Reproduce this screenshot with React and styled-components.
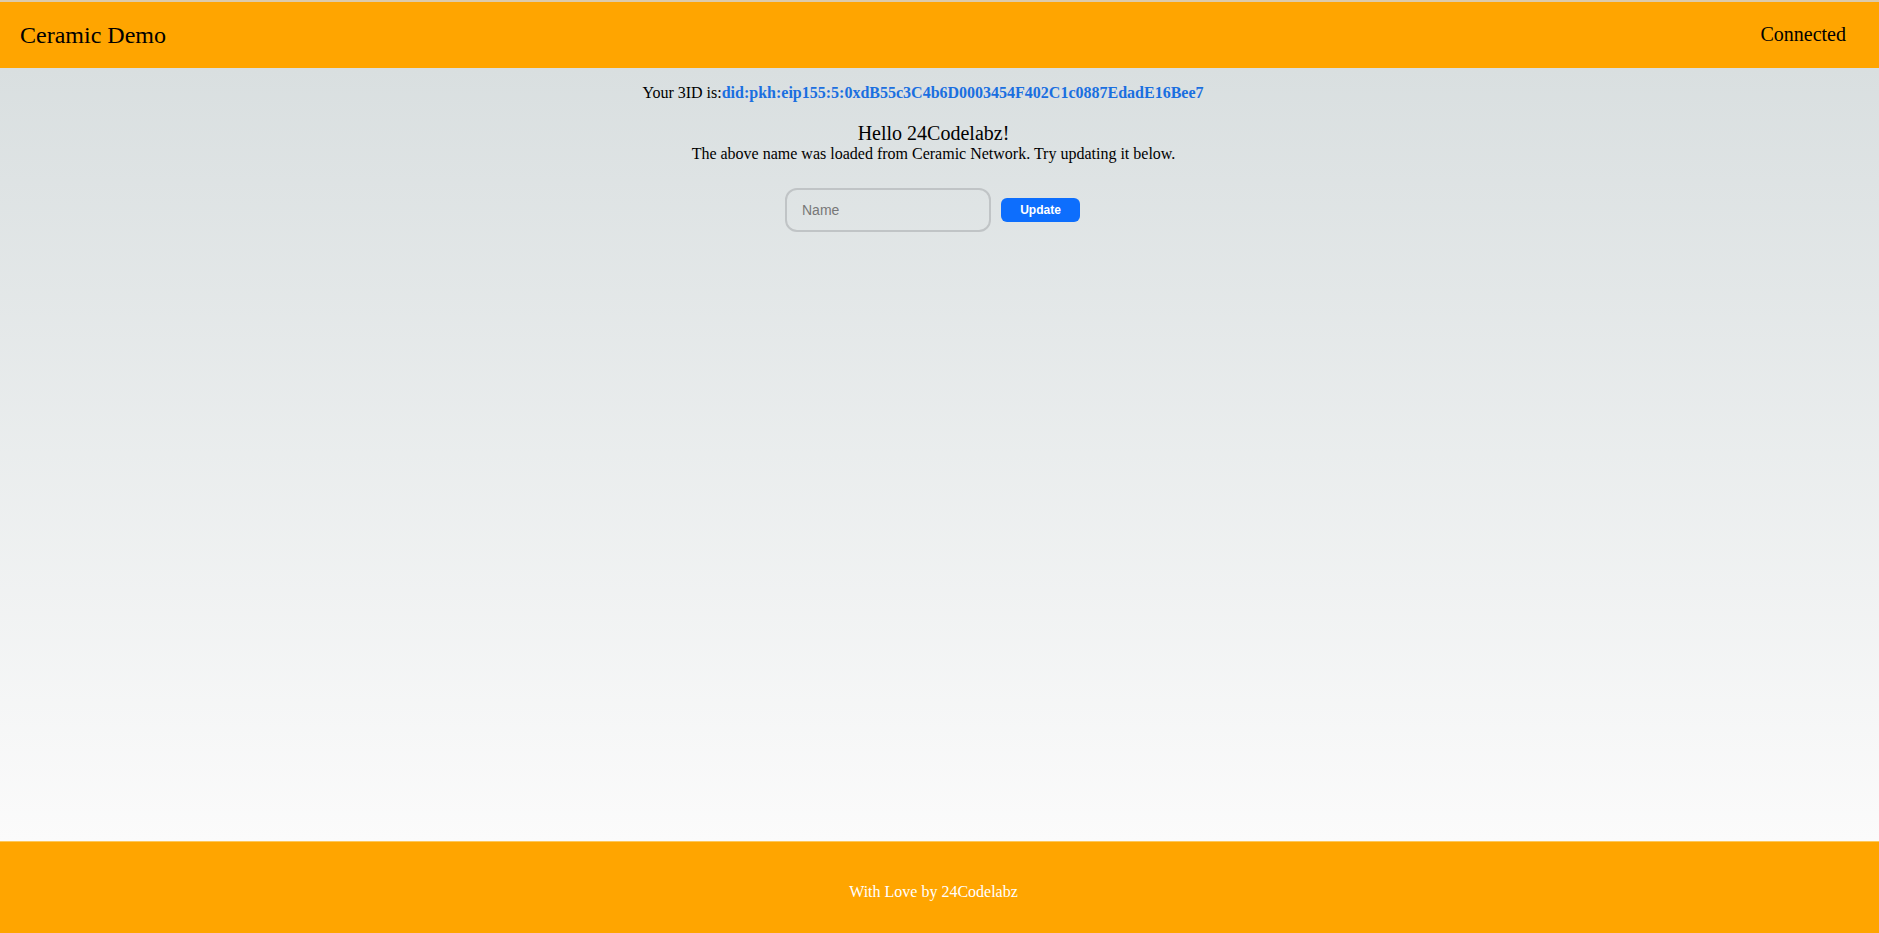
import styled, { createGlobalStyle } from "styled-components";

const GlobalStyle = createGlobalStyle`
  html, body {
    margin: 0;
    padding: 0;
  }
  body {
    font-family: "Liberation Serif", "Times New Roman", serif;
    color: #000;
  }
`;

const DID = "did:pkh:eip155:5:0xdB55c3C4b6D0003454F402C1c0887EdadE16Bee7";

export default function App() {
  return (
    <Page>
      <GlobalStyle />
      <Header>
        <Brand>Ceramic Demo</Brand>
        <Status>Connected</Status>
      </Header>

      <Main>
        <IdLine>
          Your 3ID is:<IdLink href="#">{DID}</IdLink>
        </IdLine>

        <Greeting>
          <Hello>Hello 24Codelabz!</Hello>
          <Note>The above name was loaded from Ceramic Network. Try updating it below.</Note>
        </Greeting>

        <Form onSubmit={e => e.preventDefault()}>
          <NameInput type="text" placeholder="Name" />
          <UpdateButton type="submit">Update</UpdateButton>
        </Form>
      </Main>

      <Footer>With Love by 24Codelabz</Footer>
    </Page>
  );
}

const Page = styled.div`
  min-height: 100vh;
  display: flex;
  flex-direction: column;
`;

const Header = styled.header`
  height: 66px;
  border-top: 2px solid #dccbab;
  background: #ffa500;
  display: flex;
  align-items: center;
  justify-content: space-between;
  padding: 0 33px 0 20px;
`;

const Brand = styled.div`
  font-size: 24px;
`;

const Status = styled.div`
  font-size: 20px;
  margin-top: -1px;
`;

const Main = styled.main`
  flex: 1;
  background: linear-gradient(to bottom, #d9dfe0 0%, #fbfbfb 100%);
  display: flex;
  flex-direction: column;
  align-items: center;
  padding: 16px 12px 0 0;
  font-size: 16px;
`;

const IdLine = styled.div`
  margin-right: 21px;
`;

const IdLink = styled.a`
  color: #1a6fe0;
  font-weight: bold;
  text-decoration: none;
`;

const Greeting = styled.div`
  margin-top: 20px;
  display: flex;
  flex-direction: column;
  align-items: center;
`;

const Hello = styled.div`
  font-size: 20px;
`;

const Note = styled.div`
  font-size: 16px;
`;

const Form = styled.form`
  margin-top: 25px;
  margin-right: 2px;
  display: flex;
  align-items: center;
  gap: 10px;
`;

const NameInput = styled.input`
  box-sizing: border-box;
  width: 206px;
  height: 44px;
  border: 2px solid #c0c4c6;
  border-radius: 12px;
  background: transparent;
  padding: 0 15px;
  font-family: "Liberation Sans", Arial, sans-serif;
  font-size: 14px;
  outline: none;

  &::placeholder {
    color: #777;
  }
`;

const UpdateButton = styled.button`
  box-sizing: border-box;
  width: 79px;
  height: 24px;
  border: none;
  border-radius: 6px;
  background: #0d6efd;
  color: #fff;
  font-family: "Liberation Sans", Arial, sans-serif;
  font-size: 12px;
  font-weight: bold;
  cursor: pointer;
`;

const Footer = styled.footer`
  height: 92px;
  box-sizing: border-box;
  border-top: 1px solid #fdc85a;
  background: #ffa500;
  color: #fff;
  font-size: 16px;
  text-align: center;
  padding: 41px 12px 0 0;
`;
